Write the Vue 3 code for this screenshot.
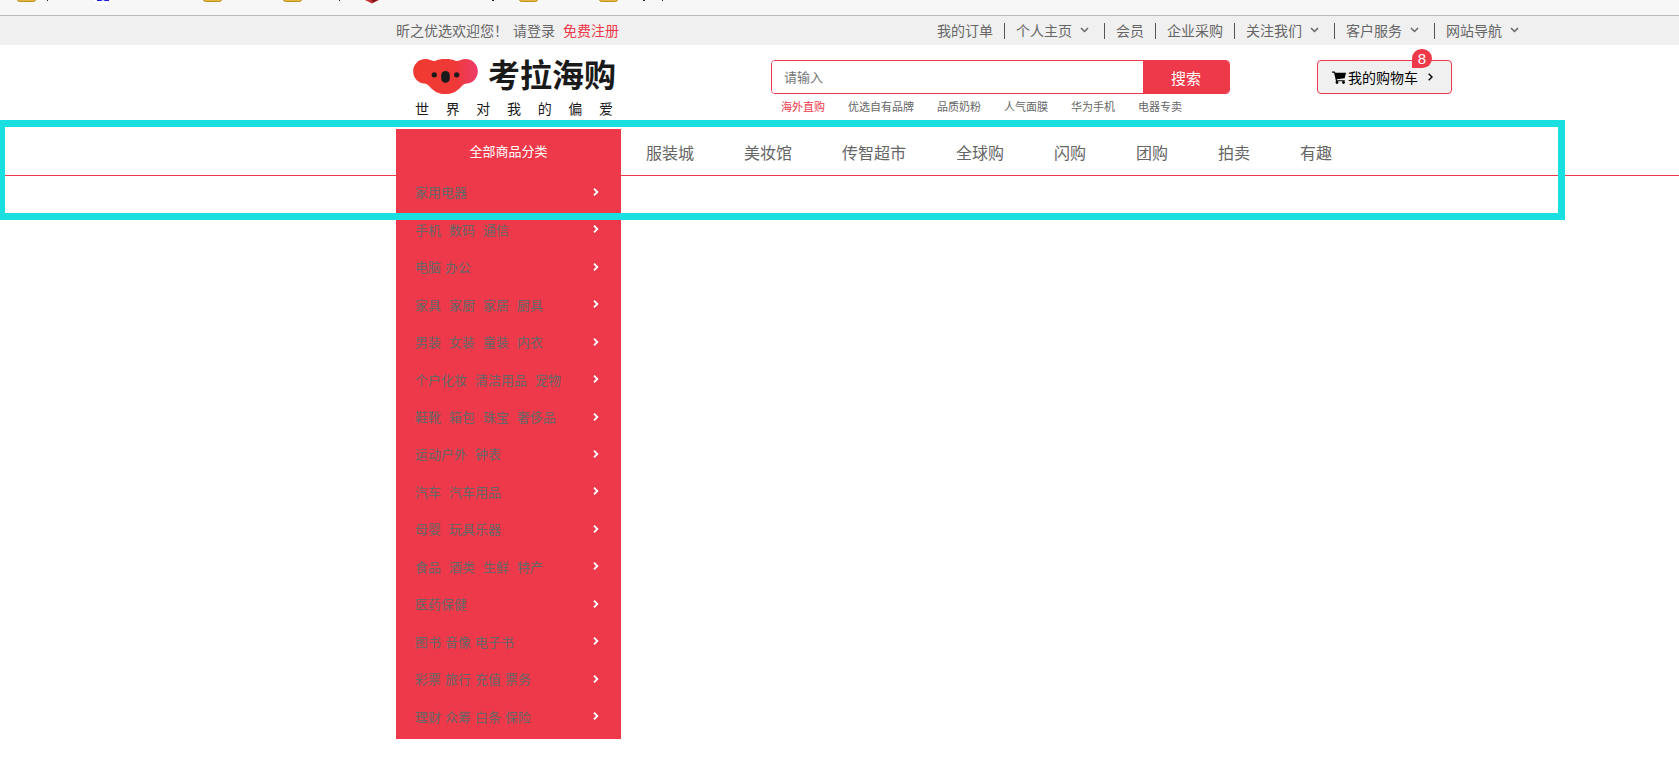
<template>
  <div class="page">
    <div class="bookmark-bar">
      <svg width="700" height="15" viewBox="0 0 700 15" aria-hidden="true">
        <rect
          v-for="x in folders"
          :key="x"
          :x="x + 0.5"
          y="-6"
          width="18"
          height="7.5"
          rx="2"
          fill="#e3b53c"
          stroke="#c0932a"
        />
        <circle cx="103" cy="-7" r="12" fill="#fff" />
        <path d="M97 0h12v1h-4l-2-1-2 1h-4z" fill="#1a1ae6" />
        <path d="M365 0h14l-4 2-3 1.500-3-1.500z" fill="#c62f33" />
        <path d="M372 0h5l-4 2.500z" fill="#6d1414" />
        <path d="M47 0h1v1h-1zM339 0h1v1h-1zM492 0h2v1h-2zM643 0h2v1h-2zM662 0h1v1h-1z" fill="#222" />
      </svg>
    </div>

    <div class="topbar">
      <div class="container topbar-inner">
        <div class="welcome">
          <span>昕之优选欢迎您！</span>
          <a href="#">请登录</a>
          <a href="#" class="register">免费注册</a>
        </div>
        <ul class="shortcuts">
          <li v-for="item in shortcuts" :key="item.name">
            <a href="#">
              {{ item.name }}
              <svg v-if="item.more" class="arrow-down" width="9" height="6" viewBox="0 0 9 6">
                <path d="M1 1l3.500 3.500L8 1" stroke="currentColor" stroke-width="1.500" fill="none" />
              </svg>
            </a>
          </li>
        </ul>
      </div>
    </div>

    <header class="container header">
      <a href="#" class="logo">
        <span class="logo-main">
          <svg width="65" height="35" viewBox="38 24 196 106">
            <defs>
              <linearGradient id="koala" x1="0" x2="1" y1="0" y2="0">
                <stop offset="0" stop-color="#f03a30" />
                <stop offset="0.650" stop-color="#ef3938" />
                <stop offset="1" stop-color="#ee3b6c" />
              </linearGradient>
            </defs>
            <path
              d="M75 24C88 24 94 31 105 30C117 22 155 22 167 30C178 31 184 24 197 24C218 24 234 41 234 61C234 82 218 98 200 98C182 99 178 130 136 130C94 130 90 99 72 98C53 97 38 82 38 61C38 41 54 24 75 24Z"
              fill="url(#koala)"
            />
            <circle cx="102" cy="72" r="8" fill="#1a1a1a" />
            <circle cx="170" cy="72" r="8" fill="#1a1a1a" />
            <rect x="123" y="60" width="26" height="36" rx="13" fill="#1a1a1a" />
          </svg>
          <strong>考拉海购</strong>
        </span>
        <span class="slogan">
          <span v-for="word in slogan" :key="word">{{ word }}</span>
        </span>
      </a>

      <div class="search">
        <form class="search-box" @submit.prevent>
          <input v-model="keyword" type="text" placeholder="请输入" aria-label="搜索" />
          <button type="submit">搜索</button>
        </form>
        <ul class="hotwords">
          <li v-for="(word, index) in hotwords" :key="word">
            <a href="#" :class="{ active: index === 0 }">{{ word }}</a>
          </li>
        </ul>
      </div>

      <a href="#" class="cart">
        <svg width="14" height="13" viewBox="0 0 14 13">
          <path d="M0 0.500h2.800l0.500 1.300H14l-1.300 5.500-8 0.900 0.300 1h7.800v1H4L2.100 1.700H0z" fill="#000" />
          <circle cx="5" cy="11.500" r="1.400" fill="#000" />
          <circle cx="11.500" cy="11.500" r="1.400" fill="#000" />
        </svg>
        <span>我的购物车</span>
        <svg class="cart-arrow" width="5" height="8" viewBox="0 0 5 8">
          <path d="M0.700 0.700L4 4L0.700 7.300" stroke="#000" stroke-width="1.400" fill="none" />
        </svg>
        <i class="count">{{ count }}</i>
      </a>
    </header>

    <nav class="nav">
      <div class="container nav-inner">
        <div class="category">
          <div class="category-title">全部商品分类</div>
          <ul class="category-list">
            <li v-for="item in categories" :key="item.words[0]">
              <div class="words" :class="{ wide: item.wide }">
                <a v-for="word in item.words" :key="word" href="#">{{ word }}</a>
              </div>
              <svg width="6" height="8" viewBox="0 0 6 8">
                <path d="M1 0.700L4.300 4L1 7.300" stroke="#fff" stroke-width="1.900" fill="none" />
              </svg>
            </li>
          </ul>
        </div>
        <ul class="nav-list">
          <li v-for="item in navs" :key="item">
            <a href="#">{{ item }}</a>
          </li>
        </ul>
      </div>
    </nav>

    <div class="highlight"></div>
  </div>
</template>

<script setup>
import { ref } from 'vue'

const keyword = ref('')
const count = ref(8)

const folders = [17, 203, 283, 519, 599]

const shortcuts = [
  { name: '我的订单' },
  { name: '个人主页', more: true },
  { name: '会员' },
  { name: '企业采购' },
  { name: '关注我们', more: true },
  { name: '客户服务', more: true },
  { name: '网站导航', more: true }
]

const slogan = ['世', '界', '对', '我', '的', '偏', '爱']

const hotwords = ['海外直购', '优选自有品牌', '品质奶粉', '人气面膜', '华为手机', '电器专卖']

const navs = ['服装城', '美妆馆', '传智超市', '全球购', '闪购', '团购', '拍卖', '有趣']

const categories = [
  { words: ['家用电器'] },
  { words: ['手机', '数码', '通信'], wide: true },
  { words: ['电脑', '办公'] },
  { words: ['家具', '家厨', '家居', '厨具'], wide: true },
  { words: ['男装', '女装', '童装', '内衣'], wide: true },
  { words: ['个户化妆', '清洁用品', '宠物'], wide: true },
  { words: ['鞋靴', '箱包', '珠宝', '奢侈品'], wide: true },
  { words: ['运动户外', '钟表'], wide: true },
  { words: ['汽车', '汽车用品'], wide: true },
  { words: ['母婴', '玩具乐器'], wide: true },
  { words: ['食品', '酒类', '生鲜', '特产'], wide: true },
  { words: ['医药保健'] },
  { words: ['图书', '音像', '电子书'] },
  { words: ['彩票', '旅行', '充值', '票务'] },
  { words: ['理财', '众筹', '白条', '保险'] }
]
</script>

<style>
body {
  background: #fff;
}
</style>

<style scoped>
.page {
  position: relative;
  min-height: 100vh;
  font-family: "Liberation Sans", "Noto Sans CJK SC", sans-serif;
  font-size: 14px;
  color: #666;
}

ul {
  margin: 0;
  padding: 0;
  list-style: none;
}

a {
  color: inherit;
  text-decoration: none;
}

svg {
  display: block;
  flex-shrink: 0;
}

.container {
  box-sizing: border-box;
  max-width: 1127px;
  margin-left: 396px;
}

.bookmark-bar {
  background: #f7f7f7;
  border-bottom: 1px solid #bcbcbc;
  overflow: hidden;
}

/* top shortcut bar */
.topbar {
  background: #f0f0f0;
}

.topbar-inner {
  display: flex;
  align-items: center;
  justify-content: space-between;
  height: 29px;
}

.welcome {
  display: flex;
  line-height: 16px;
}

.welcome a {
  margin-left: 5px;
}

.welcome .register {
  margin-left: 8px;
  color: #ee394a;
}

.shortcuts {
  display: flex;
}

.shortcuts li {
  padding: 0 11px;
  line-height: 16px;
  border-right: 1px solid #555;
}

.shortcuts li:last-child {
  padding-right: 0;
  border-right: 0;
}

.shortcuts a {
  display: flex;
  align-items: center;
}

.arrow-down {
  margin: 0 4px 2px 8px;
}

/* header */
.header {
  display: flex;
  align-items: flex-start;
  height: 84px;
  padding-top: 15px;
}

.logo {
  width: 375px;
  color: #1a1a1a;
}

.logo-main {
  display: flex;
  align-items: center;
  gap: 10px;
  height: 32px;
  padding-left: 17px;
}

.logo-main strong {
  font-size: 32px;
  font-weight: 700;
  line-height: 32px;
}

.slogan {
  display: flex;
  justify-content: space-between;
  width: 198px;
  margin-left: 19px;
  padding-top: 7px;
  line-height: 20px;
}

.search {
  width: 459px;
}

.search-box {
  box-sizing: border-box;
  display: flex;
  height: 34px;
  border: 1px solid #ee394a;
  border-radius: 4px;
  overflow: hidden;
}

.search-box input {
  flex: 1;
  min-width: 0;
  padding: 0 12px;
  border: 0;
  outline: none;
  font-family: inherit;
  font-size: 13px;
}

.search-box input::placeholder {
  color: #757575;
}

.search-box button {
  width: 86px;
  padding: 0;
  border: 0;
  background: #ee394a;
  color: #fff;
  font-family: inherit;
  font-size: 15px;
}

.hotwords {
  display: flex;
  gap: 23px;
  padding: 5px 0 0 10px;
  font-size: 11px;
  line-height: 16px;
}

.hotwords .active {
  color: #ee394a;
}

.cart {
  position: relative;
  box-sizing: border-box;
  display: flex;
  align-items: center;
  width: 135px;
  height: 34px;
  margin-left: 87px;
  padding-left: 14px;
  background: #f0f0f0;
  border: 1px solid #ee394a;
  border-radius: 4px;
  color: #000;
}

.cart span {
  margin-left: 2px;
}

.cart-arrow {
  margin-left: 10px;
}

.count {
  position: absolute;
  top: -12px;
  right: 19px;
  width: 20px;
  height: 19px;
  background: #ee394a;
  border-radius: 10px 10px 10px 0;
  color: #fff;
  font-size: 15px;
  font-style: normal;
  line-height: 19px;
  text-align: center;
}

/* navigation */
.nav {
  border-bottom: 1px solid #ee394a;
}

.nav-inner {
  display: flex;
  height: 46px;
}

.category {
  position: relative;
  width: 225px;
  background: #ee394a;
}

.category-title {
  color: #fff;
  font-size: 13px;
  line-height: 46px;
  text-align: center;
}

.category-list {
  position: absolute;
  top: 44px;
  left: 0;
  box-sizing: border-box;
  display: grid;
  grid-auto-rows: 1fr;
  width: 100%;
  height: 566px;
  padding-bottom: 4px;
  background: #ee394a;
  font-size: 13px;
}

.category-list li {
  display: flex;
  align-items: center;
  justify-content: space-between;
  padding: 0 22px 0 19px;
}

.words {
  display: flex;
  gap: 4px;
}

.words.wide {
  gap: 8px;
}

.nav-list {
  display: flex;
  font-size: 16px;
  line-height: 50px;
}

.nav-list li {
  padding: 0 25px;
}

.highlight {
  position: absolute;
  top: 120px;
  right: 114px;
  left: -2px;
  box-sizing: border-box;
  height: 100px;
  border: 7px solid #19dfe0;
  pointer-events: none;
}
</style>
